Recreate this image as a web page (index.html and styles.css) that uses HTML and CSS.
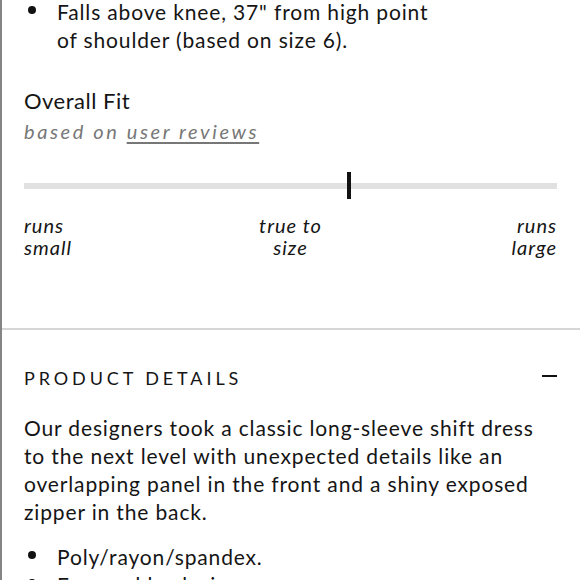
FILE: index.html
```html
<!DOCTYPE html>
<html lang="en">
<head>
<meta charset="utf-8">
<title>Product fit</title>
<link rel="stylesheet" href="styles.css">
</head>
<body>
<div class="page">
  <section class="fit">
    <ul class="bullets top-list">
      <li>Falls above knee, 37" from high point of shoulder (based on size 6).</li>
    </ul>
    <h2 class="fit-title">Overall Fit</h2>
    <p class="fit-sub">based on <a href="#" class="fit-link">user reviews</a></p>
    <div class="track">
      <span class="marker" style="left: 61%"></span>
    </div>
    <div class="labels">
      <span class="lbl lbl-left">runs<br>small</span>
      <span class="lbl lbl-mid">true to<br>size</span>
      <span class="lbl lbl-right">runs<br>large</span>
    </div>
  </section>
  <section class="details">
    <div class="details-head">
      <h3 class="details-title">PRODUCT DETAILS</h3>
      <span class="minus"></span>
    </div>
    <p class="details-text">Our designers took a classic long-sleeve shift dress to the next level with unexpected details like an overlapping panel in the front and a shiny exposed zipper in the back.</p>
    <ul class="bullets">
      <li>Poly/rayon/spandex.</li>
      <li>Exposed back zipper.</li>
    </ul>
  </section>
</div>
</body>
</html>
```
FILE: styles.css
```css
* { box-sizing: border-box; }
html, body { margin: 0; padding: 0; background: #fff; }
body {
  font-family: Lato, "Noto Sans", sans-serif;
  color: #151515;
}
.page {
  width: 580px;
  height: 580px;
  overflow: hidden;
  border-left: 2px solid #858585;
}
.fit {
  padding: 0 23px 0 22px;
  height: 332px;
  border-bottom: 2px solid #d6d6d6;
}
.bullets {
  list-style: none;
  margin: 0;
  padding: 0;
}
.bullets li {
  position: relative;
  padding-left: 33px;
  font-size: 21px;
  line-height: 28px;
  letter-spacing: 0.85px;
}
.bullets li::before {
  content: "";
  position: absolute;
  left: 4px;
  top: 8px;
  width: 8px;
  height: 8px;
  border-radius: 50%;
  background: #111;
}
.top-list { margin-top: -2px; width: 422px; }
.fit-title {
  margin: 33px 0 0;
  font-size: 22px;
  font-weight: 400;
  line-height: 28px;
  letter-spacing: 0.5px;
}
.fit-sub {
  margin: 3px 0 0;
  font-size: 20px;
  font-style: italic;
  line-height: 26px;
  color: #777;
  letter-spacing: 2.6px;
}
.fit-link { color: #777; text-decoration: underline; text-underline-offset: 3px; }
.track {
  position: relative;
  height: 6px;
  margin-top: 39px;
  background: #e1e1e1;
}
.marker {
  position: absolute;
  top: -11px;
  width: 4px;
  height: 27px;
  margin-left: -2px;
  background: #111;
}
.labels {
  display: grid;
  grid-template-columns: 1fr auto 1fr;
  margin-top: 25px;
  font-size: 20px;
  font-style: italic;
  line-height: 22px;
  letter-spacing: 1px;
}
.lbl-left { text-align: left; }
.lbl-mid { text-align: center; }
.lbl-right { text-align: right; }
.details { padding: 0 23px 0 22px; }
.details-head {
  display: flex;
  justify-content: space-between;
  align-items: center;
  margin-top: 36px;
}
.details-title {
  margin: 0;
  font-size: 18px;
  font-weight: 400;
  letter-spacing: 3.9px;
  line-height: 24px;
}
.minus {
  width: 15px;
  height: 2px;
  margin-top: -4px;
  background: #111;
}
.details-text {
  margin: 24px 0 0;
  width: 524px;
  font-size: 21px;
  line-height: 28px;
  letter-spacing: 0.85px;
}
.details .bullets { margin-top: 17px; }
```
